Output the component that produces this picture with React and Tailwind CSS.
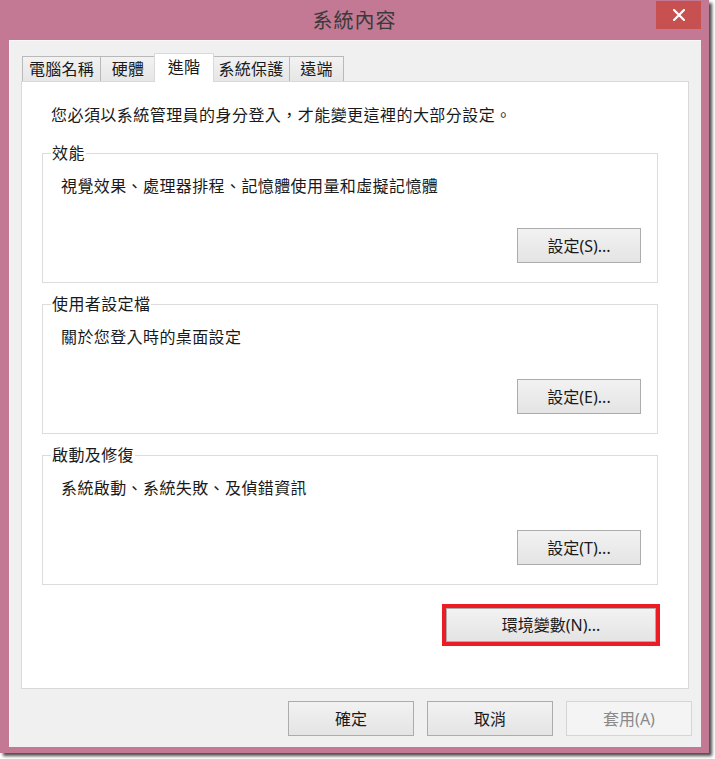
export default function App() {
  const font = { fontFamily: '"Noto Sans", "Noto Sans CJK TC", sans-serif' };
  const btn =
    "flex items-center justify-center border border-[#acacac] bg-gradient-to-b from-[#f2f2f2] to-[#e4e4e4] text-[16px] text-[#1a1a1a] leading-none";
  const tab =
    "h-[25px] flex items-center justify-center border border-[#b9b9b9] border-b-0 bg-gradient-to-b from-[#f2f2f2] to-[#e6e6e6]";
  const Group = ({ title, desc, btnLabel, focused, className = "" }) => (
    <fieldset className={"m-0 ml-[20px] w-[616px] border border-[#dcdcdc] p-0 " + className}>
      <legend className="ml-[8px] px-[1px] text-[16px] leading-[20px] text-[#1a1a1a] tracking-[0.4px]">
        {title}
      </legend>
      <div className="flex flex-col pl-[18px] pr-[16px] pt-[11px] pb-[19px]">
        <div className="h-[24px] leading-[24px] text-[16px] text-[#1a1a1a] tracking-[0.4px]">{desc}</div>
        <div className="mt-[30px] flex justify-end">
          <button
            className={
              btn +
              " w-[124px] h-[35px] " +
              (focused ? "border-[#7eb4ea]" : "")
            }
          >
            {btnLabel}
          </button>
        </div>
      </div>
    </fieldset>
  );
  return (
    <div className="w-[715px] h-[759px] bg-white" style={font}>
      <div className="w-[709px] h-[753px] bg-[#c37893] shadow-[3px_3px_3px_rgba(0,0,0,0.7)] flex flex-col">
        <div className="relative h-[40px] flex items-center justify-center">
          <span className="text-[20px] text-[#3a3a3a] tracking-[1px] leading-none pt-[2px]">系統內容</span>
          <div className="absolute top-[1px] right-[8px] w-[45px] h-[28px] bg-[#c75050] flex items-center justify-center">
            <svg width="12" height="12" viewBox="0 0 12 12">
              <path d="M1 1L11 11M11 1L1 11" stroke="white" strokeWidth="2.2" strokeLinecap="square" />
            </svg>
          </div>
        </div>
        <div className="ml-[9px] w-[692px] h-[707px] bg-[#f0f0f0] border-l border-t border-[#f8f8f8] flex flex-col pt-[12px]">
          <div className="ml-[11px] w-[668px] flex flex-col">
            <div className="flex items-end h-[28px] pl-[1px] text-[16px] text-[#1a1a1a] tracking-[0.3px]">
              <div className={tab + " w-[79px]"}>電腦名稱</div>
              <div className={tab + " w-[56px] -ml-px"}>硬體</div>
              <div className="relative z-10 -mb-px h-[29px] -ml-[2px] w-[60px] pb-[3px] flex items-center justify-center border border-[#d9d9d9] border-b-0 bg-white">進階</div>
              <div className={tab + " w-[78px] -ml-[2px]"}>系統保護</div>
              <div className={tab + " w-[55px] -ml-px"}>遠端</div>
            </div>
            <div className="h-[608px] bg-white border border-[#d9d9d9] flex flex-col">
              <div className="mt-[21px] ml-[29px] h-[24px] leading-[24px] text-[16px] text-[#1a1a1a] tracking-[0.45px]">
                您必須以系統管理員的身分登入，才能變更這裡的大部分設定。
              </div>
              <Group
                className="mt-[16px]"
                title="效能"
                desc="視覺效果、處理器排程、記憶體使用量和虛擬記憶體"
                btnLabel="設定(S)..."
                focused
              />
              <Group
                className="mt-[11px]"
                title="使用者設定檔"
                desc="關於您登入時的桌面設定"
                btnLabel="設定(E)..."
              />
              <Group
                className="mt-[11px]"
                title="啟動及修復"
                desc="系統啟動、系統失敗、及偵錯資訊"
                btnLabel="設定(T)..."
              />
              <div className="mt-[19px] self-end mr-[28px] w-[218px] h-[42px] border-4 border-[#ed1c24] flex">
                <button className={btn + " w-full h-full"}>環境變數(N)...</button>
              </div>
            </div>
          </div>
          <div className="mt-[12px] flex justify-end gap-[13px] pr-[9px]">
            <button className={btn + " w-[126px] h-[35px]"}>確定</button>
            <button className={btn + " w-[126px] h-[35px]"}>取消</button>
            <button className="flex items-center justify-center w-[126px] h-[35px] border border-[#d5d5d5] bg-[#f4f4f4] text-[16px] text-[#8a8a8a] leading-none">套用(A)</button>
          </div>
        </div>
      </div>
    </div>
  );
}
